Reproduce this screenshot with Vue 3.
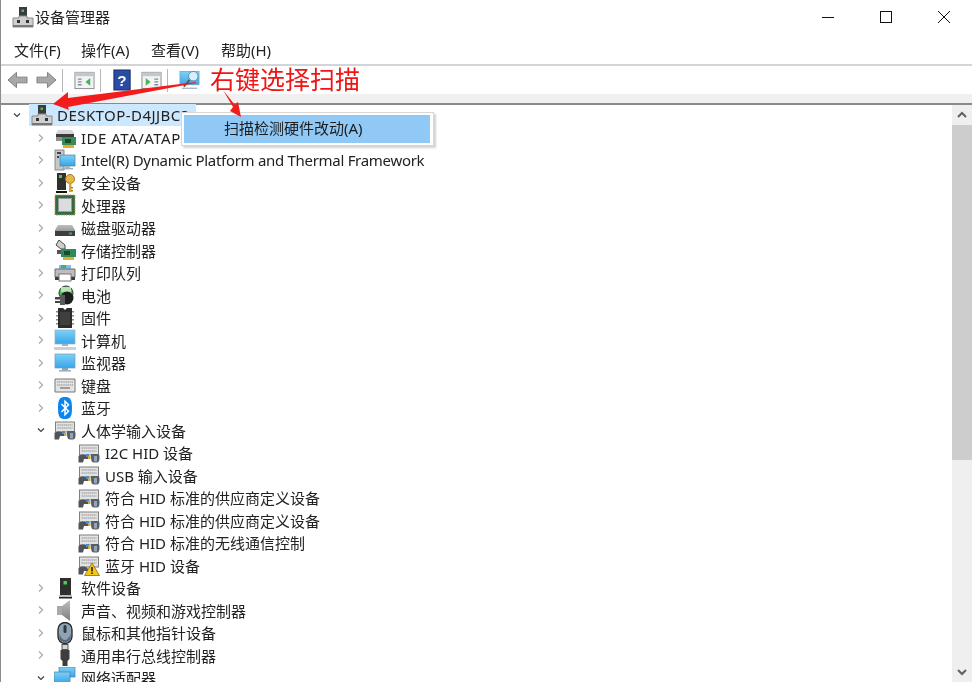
<script setup>
const rows = [
  { level: 1, icon: 'ide', text: 'IDE ATA/ATAPI 控制器', arrow: 'r', cls: 'wide' },
  { level: 1, icon: 'intel', text: 'Intel(R) Dynamic Platform and Thermal Framework', arrow: 'r', cls: 'tight' },
  { level: 1, icon: 'key', text: '安全设备', arrow: 'r' },
  { level: 1, icon: 'cpu', text: '处理器', arrow: 'r' },
  { level: 1, icon: 'disk', text: '磁盘驱动器', arrow: 'r' },
  { level: 1, icon: 'storage', text: '存储控制器', arrow: 'r' },
  { level: 1, icon: 'printer', text: '打印队列', arrow: 'r' },
  { level: 1, icon: 'battery', text: '电池', arrow: 'r' },
  { level: 1, icon: 'chip', text: '固件', arrow: 'r' },
  { level: 1, icon: 'computer', text: '计算机', arrow: 'r' },
  { level: 1, icon: 'monitor', text: '监视器', arrow: 'r' },
  { level: 1, icon: 'keyboard', text: '键盘', arrow: 'r' },
  { level: 1, icon: 'bluetooth', text: '蓝牙', arrow: 'r' },
  { level: 1, icon: 'hid', text: '人体学输入设备', arrow: 'd' },
  { level: 2, icon: 'hid', text: 'I2C HID 设备' },
  { level: 2, icon: 'hid', text: 'USB 输入设备' },
  { level: 2, icon: 'hid', text: '符合 HID 标准的供应商定义设备' },
  { level: 2, icon: 'hid', text: '符合 HID 标准的供应商定义设备' },
  { level: 2, icon: 'hid', text: '符合 HID 标准的无线通信控制' },
  { level: 2, icon: 'hidwarn', text: '蓝牙 HID 设备' },
  { level: 1, icon: 'soft', text: '软件设备', arrow: 'r' },
  { level: 1, icon: 'sound', text: '声音、视频和游戏控制器', arrow: 'r' },
  { level: 1, icon: 'mouse', text: '鼠标和其他指针设备', arrow: 'r' },
  { level: 1, icon: 'usb', text: '通用串行总线控制器', arrow: 'r' },
  { level: 1, icon: 'net', text: '网络适配器', arrow: 'd' }
]
const menus = ['文件(F)', '操作(A)', '查看(V)', '帮助(H)']
</script>

<template>
  <div class="win">
    <svg class="defs" width="0" height="0" aria-hidden="true">
      <defs>
        <linearGradient id="scr" x1="0" y1="0" x2="0" y2="1"><stop offset="0" stop-color="#7fd0f7"/><stop offset="1" stop-color="#38a6e8"/></linearGradient>
        <linearGradient id="gry" x1="0" y1="0" x2="0" y2="1"><stop offset="0" stop-color="#bdbdbd"/><stop offset="1" stop-color="#7f7f7f"/></linearGradient>
      </defs>
      <symbol id="i-pc" viewBox="0 0 22 22">
        <rect x="7" y="1" width="8" height="11" fill="#3b3b3b"/><rect x="9.500" y="3.500" width="2.500" height="2.500" fill="#3fc24f"/>
        <path d="M1 12h6v-2h8v2h6v9H1z" fill="#cfcfcf" stroke="#8a8a8a"/><rect x="5" y="14" width="3" height="3" fill="#333"/><rect x="14" y="14" width="3" height="3" fill="#333"/><rect x="1" y="19" width="20" height="2" fill="#777"/>
      </symbol>
      <symbol id="i-ide" viewBox="0 0 22 22">
        <path d="M2 6l2-3h14l2 3v3H2z" fill="#d5d5d5"/><rect x="2" y="7" width="18" height="3" fill="#3a3a3a"/><rect x="8" y="10" width="14" height="8" fill="#3b8a5a"/><rect x="2" y="10" width="6" height="4" fill="#8f8f8f"/><rect x="11" y="12" width="6" height="4" fill="#174f2c"/><rect x="9" y="18" width="11" height="3" fill="#e3ab2d"/>
      </symbol>
      <symbol id="i-intel" viewBox="0 0 22 22">
        <rect x="1" y="1" width="9" height="20" fill="#c8c8c8" stroke="#777" stroke-width=".8"/><rect x="3" y="3" width="4" height="2" fill="#444"/><rect x="3" y="7" width="2" height="2" fill="#444"/>
        <rect x="6" y="6" width="15" height="11" fill="url(#scr)" stroke="#4e7fa3" stroke-width=".7"/><rect x="11" y="17" width="5" height="2" fill="#a9b7c2"/><rect x="8" y="19" width="11" height="1.400" fill="#9fb0bc"/>
      </symbol>
      <symbol id="i-key" viewBox="0 0 22 22">
        <path d="M3 1h9v17H3z" fill="#2f2f2f"/><rect x="5" y="3" width="3" height="3" fill="#46d05a"/><path d="M2 19h11v2H2z" fill="#111"/>
        <circle cx="16" cy="7" r="4.500" fill="#e6b64a" stroke="#a47a1e"/><path d="M15 10h2.400v10H15z" fill="#d6a53a"/><path d="M17 15h2v1.600h-2zM17 18h2v1.600h-2z" fill="#a47a1e"/>
      </symbol>
      <symbol id="i-cpu" viewBox="0 0 22 22">
        <rect x="1" y="1" width="20" height="20" fill="#2f6b4c" stroke="#c9a13a" stroke-dasharray="1.500 1"/><rect x="4.500" y="4.500" width="13" height="13" fill="#dcdcdc" stroke="#9a9a9a"/>
      </symbol>
      <symbol id="i-disk" viewBox="0 0 22 22">
        <path d="M4 8h14l3 5v6H1v-6z" fill="url(#gry)"/><rect x="1" y="14" width="20" height="5" fill="#3e3e3e"/><rect x="15" y="15.500" width="3" height="2" fill="#2fb34a"/>
      </symbol>
      <symbol id="i-storage" viewBox="0 0 22 22">
        <path d="M5 1l6 5v4H7L2 6z" fill="#cfcfcf" stroke="#4a4a4a"/><path d="M3 11h5v4H3z" fill="#555"/><rect x="7" y="10" width="15" height="8" fill="#2f8a5a"/><rect x="10" y="12" width="6" height="4" fill="#174f2c"/><rect x="9" y="18" width="11" height="3" fill="#e3ab2d"/>
      </symbol>
      <symbol id="i-printer" viewBox="0 0 22 22">
        <rect x="5" y="3" width="12" height="5" fill="#79c2f0"/><rect x="7" y="3" width="5" height="3" fill="#4bb05e"/><path d="M1 7h20v8H1z" fill="#bdbdbd" stroke="#6d6d6d"/><rect x="1" y="15" width="4" height="3" fill="#3b3b3b"/><rect x="17" y="15" width="4" height="3" fill="#3b3b3b"/><rect x="5" y="12" width="12" height="7" fill="#fff" stroke="#777"/>
      </symbol>
      <symbol id="i-battery" viewBox="0 0 22 22">
        <circle cx="12" cy="9" r="7" fill="#55b85a" stroke="#333"/><rect x="7" y="3" width="10" height="5" fill="#b9e3b4"/><circle cx="13" cy="14" r="6.500" fill="#1e1e1e"/><path d="M1 13h7v2.500H1zM1 17h7v2H1z" fill="#444"/><path d="M6 11h5v10H6z" fill="#5a5a5a"/>
      </symbol>
      <symbol id="i-chip" viewBox="0 0 22 22">
        <path d="M4 1h5l2 2 2-2h5v20H4z" fill="#2d2d2d"/><path d="M2 4h2v1.500H2zM2 8h2v1.500H2zM2 12h2v1.500H2zM2 16h2v1.500H2zM18 4h2v1.500h-2zM18 8h2v1.500h-2zM18 12h2v1.500h-2zM18 16h2v1.500h-2z" fill="#888"/><rect x="6" y="5" width="10" height="13" fill="#3f3f3f"/>
      </symbol>
      <symbol id="i-computer" viewBox="0 0 22 22">
        <rect x="1" y="1" width="20" height="14" fill="url(#scr)" stroke="#8eb2c9" stroke-width=".7"/><rect x="8" y="15" width="6" height="2" fill="#9db1be"/><rect x="0" y="18" width="22" height="3" fill="#c9d2d8"/>
      </symbol>
      <symbol id="i-monitor" viewBox="0 0 22 22">
        <rect x="1" y="2" width="20" height="14" fill="url(#scr)" stroke="#6f9cb9" stroke-width=".7"/><rect x="8" y="16" width="6" height="2" fill="#8ea3b0"/><rect x="5" y="18" width="12" height="1.600" fill="#9eb1bd"/>
      </symbol>
      <symbol id="i-keyboard" viewBox="0 0 22 22">
        <path d="M1 5h20v13H1z" fill="#e4e4e4" stroke="#777"/><path d="M3 8h16M3 11h16" stroke="#a6a6a6" stroke-width="1.500" stroke-dasharray="1.400 .7"/><path d="M6 14h10" stroke="#8a8a8a" stroke-width="1.600"/>
      </symbol>
      <symbol id="i-bluetooth" viewBox="0 0 22 22">
        <path d="M11 0c5 0 7 2 7 11s-2 11-7 11-7-2-7-11 2-11 7-11z" fill="#0a84f0"/><path d="M7.500 7l7 7.200-3.500 3.500V4.300l3.500 3.500-7 7.200" fill="none" stroke="#fff" stroke-width="1.500"/>
      </symbol>
      <symbol id="i-hid" viewBox="0 0 22 22">
        <rect x="1.500" y="3" width="19" height="10" fill="#e2e2e2" stroke="#808080"/><path d="M3.500 6h15M3.500 9h15" stroke="#aaa" stroke-width="1.400" stroke-dasharray="1.400 .6"/>
        <path d="M0.500 14c2-2 7-2 9 0l1 3H6l-1 3.500H0.500z" fill="#50545a"/><path d="M13 12h7c1.500 0 1.500 2 1.500 4 0 3-1 4.500-2.500 4.500h-3c-3 0-3-3-3-8.500z" fill="#586069"/><path d="M16 14h3v5.500h-3z" fill="#94a5b5"/><rect x="8" y="12" width="3" height="3" fill="#3d8fd6"/><rect x="10" y="14" width="2.500" height="3" fill="#e4a034"/>
      </symbol>
      <symbol id="i-hidwarn" viewBox="0 0 22 22">
        <rect x="1.500" y="3" width="19" height="10" fill="#e2e2e2" stroke="#808080"/><path d="M3.500 6h15M3.500 9h15" stroke="#aaa" stroke-width="1.400" stroke-dasharray="1.400 .6"/>
        <path d="M0.500 14c2-2 7-2 9 0l1 3H6l-1 3.500H0.500z" fill="#50545a"/>
        <path d="M14 9l7.500 12.500H6.500z" fill="#f5c518" stroke="#7a5b06" stroke-width=".7"/><path d="M13.200 13h1.600v4.500h-1.600zM13.200 18.500h1.600v1.600h-1.600z" fill="#222"/>
      </symbol>
      <symbol id="i-soft" viewBox="0 0 22 22">
        <rect x="6" y="1" width="11" height="17" fill="#2f2f2f"/><rect x="9.500" y="4" width="3.500" height="3.500" fill="#46d05a"/><rect x="5" y="18" width="13" height="2" fill="#bcbcbc"/><rect x="5" y="20" width="13" height="1.500" fill="#222"/>
      </symbol>
      <symbol id="i-sound" viewBox="0 0 22 22">
        <path d="M3 7h5l8-6v21l-8-6H3z" fill="url(#gry)"/><path d="M3 7h5v9H3z" fill="#a9a9a9"/>
      </symbol>
      <symbol id="i-mouse" viewBox="0 0 22 22">
        <rect x="4" y="0.500" width="14" height="21" rx="7" fill="#8fa3b5" stroke="#222" stroke-width="1.300"/><rect x="9.500" y="3" width="3" height="8" rx="1.500" fill="#2d3a46"/><path d="M5.500 12c3 8 8 8 11 0v5c-2 4-9 4-11 0z" fill="#566877"/>
      </symbol>
      <symbol id="i-usb" viewBox="0 0 22 22">
        <rect x="8" y="0.500" width="6" height="5" fill="#d5d5d5" stroke="#555"/><path d="M6.500 6h9v9l-2 2v5h-5v-5l-2-2z" fill="#3d3d3d"/>
      </symbol>
      <symbol id="i-net" viewBox="0 0 22 22">
        <rect x="5" y="0" width="16" height="10" fill="url(#scr)" stroke="#4e7fa3" stroke-width=".7"/><rect x="0" y="5" width="16" height="11" fill="url(#scr)" stroke="#4e7fa3" stroke-width=".7"/>
      </symbol>
      <symbol id="i-chev-r" viewBox="0 0 16 16"><path d="M6 4.500l3.500 3.500-3.500 3.500" fill="none" stroke="#aaa" stroke-width="1.200"/></symbol>
      <symbol id="i-chev-d" viewBox="0 0 16 16"><path d="M5 6.500l3 3 3-3" fill="none" stroke="#404040" stroke-width="1.200"/></symbol>
    </svg>

    <header class="title">
      <svg class="ico"><use href="#i-pc"/></svg>
      <span class="title-text">设备管理器</span>
      <div class="caps">
        <svg class="cap" viewBox="0 0 14 14"><path d="M1 7.500h12" stroke="#111" fill="none"/></svg>
        <svg class="cap" viewBox="0 0 14 14"><rect x="1.500" y="1.500" width="11" height="11" stroke="#111" fill="none"/></svg>
        <svg class="cap" viewBox="0 0 14 14"><path d="M1 1l12 12M13 1L1 13" stroke="#111" fill="none"/></svg>
      </div>
    </header>

    <nav class="menubar">
      <span v-for="m in menus" :key="m" class="menu">{{ m }}</span>
    </nav>

    <div class="toolbar">
      <svg class="tool" viewBox="0 0 22 22"><path d="M1 11l9-8v5h11v6H10v5z" fill="#a8a8a8" stroke="#7e7e7e"/></svg>
      <svg class="tool" viewBox="0 0 22 22"><path d="M21 11l-9-8v5H1v6h11v5z" fill="#a8a8a8" stroke="#7e7e7e"/></svg>
      <i class="sep"></i>
      <svg class="tool" viewBox="0 0 22 22"><rect x="1" y="3" width="20" height="17" fill="#f3f3f3" stroke="#8a8a8a"/><rect x="1" y="3" width="20" height="4" fill="#c2c8cd"/><path d="M4 10h4M4 13h4M4 16h4" stroke="#7b8da0" stroke-width="1.400"/><path d="M17 9v8l-5-4z" fill="#46b35a"/></svg>
      <i class="sep"></i>
      <svg class="tool" viewBox="0 0 22 22"><rect x="2" y="0.500" width="17" height="21" fill="#2a4ca5" stroke="#172b66"/><text x="10.500" y="17" class="q">?</text></svg>
      <svg class="tool" viewBox="0 0 22 22"><rect x="1" y="3" width="20" height="17" fill="#f3f3f3" stroke="#8a8a8a"/><rect x="1" y="3" width="20" height="4" fill="#c2c8cd"/><path d="M5 9v8l5-4z" fill="#46b35a"/><path d="M14 10h4M14 13h4M14 16h4" stroke="#7b8da0" stroke-width="1.400"/></svg>
      <i class="sep"></i>
      <svg class="tool" viewBox="0 0 22 22"><rect x="1" y="2" width="20" height="14" fill="url(#scr)" stroke="#6f9cb9" stroke-width=".7"/><circle cx="15" cy="7" r="5" fill="#d8eefb" stroke="#4e8fb6"/><path d="M11 11l-6 7" stroke="#555" stroke-width="2"/><rect x="3" y="19" width="16" height="1.300" fill="#9eb1bd"/></svg>
    </div>

    <div class="strip"></div>

    <main class="content">
      <div class="tree">
        <div class="row root-row">
          <svg class="chev"><use href="#i-chev-d"/></svg>
          <span class="root-label">
            <svg class="ico"><use href="#i-pc"/></svg>
            <span class="lbl root-lbl">DESKTOP-D4JJBC3</span>
          </span>
        </div>
        <div v-for="(r, i) in rows" :key="i" class="row" :class="'lv' + r.level">
          <svg v-if="r.arrow" class="chev"><use :href="r.arrow === 'r' ? '#i-chev-r' : '#i-chev-d'"/></svg>
          <span v-else class="chev"></span>
          <svg class="ico"><use :href="'#i-' + r.icon"/></svg>
          <span class="lbl" :class="r.cls">{{ r.text }}</span>
        </div>
      </div>
      <div class="scrollbar">
        <svg class="sbtn" viewBox="0 0 20 20"><path d="M6 12l4-4 4 4" fill="none" stroke="#606060" stroke-width="2"/></svg>
        <div class="thumb"></div>
        <div class="track"></div>
        <svg class="sbtn" viewBox="0 0 20 20"><path d="M6 8l4 4 4-4" fill="none" stroke="#606060" stroke-width="2"/></svg>
      </div>
    </main>

    <div class="ctx"><div class="ctx-item">扫描检测硬件改动(A)</div></div>
    <div class="note">右键选择扫描</div>
    <svg class="arrows" viewBox="0 0 972 682">
      <path d="M196 82L68 98V92L53 104L69 110L68 107L196 83z" fill="#f21c1c"/>
      <path d="M223 90L234.500 104.500L238 102L241 117L230 111L233 107z" fill="#f21c1c"/>
    </svg>
  </div>
</template>

<style>
html, body { margin: 0; background: #fff; overflow: hidden; }
</style>

<style scoped>
.win {
  position: relative;
  width: 972px;
  height: 682px;
  overflow: hidden;
  background: #fff;
  box-sizing: border-box;
  border-left: 1px solid #8c8c8c;
  font-family: "Noto Sans", "Noto Sans CJK SC", sans-serif;
  font-size: 15px;
  color: #222;
  display: flex;
  flex-direction: column;
  filter: blur(0.35px);
}
.defs { display: block; position: absolute; }
.title { height: 34px; display: flex; align-items: center; padding-left: 11px; gap: 1px; flex: none; }
.title-text { line-height: 22px; }
.caps { margin-left: auto; display: flex; align-items: center; margin-right: 21px; gap: 44px; }
.cap { width: 14px; height: 14px; display: block; }
.menubar { height: 30px; padding: 1px 0 0 13px; display: flex; align-items: center; flex: none; box-sizing: border-box; }
.menu { width: 70px; flex: none; white-space: nowrap; }
.menu:first-child { width: 67px; }
.toolbar { height: 28px; border-top: 2px solid #d2d4d8; display: flex; align-items: center; padding-left: 6px; flex: none; }
.tool { width: 21px; height: 22px; display: block; flex: none; }
.tool + .tool { margin-left: 8px; }
.q { font: 700 16px "Liberation Sans", sans-serif; fill: #fff; text-anchor: middle; }
.sep { width: 1px; height: 23px; background: #b8b8b8; margin: 0 11px 0 5px; flex: none; }
.strip { height: 9px; background: #f0f0f0; border-bottom: 2px solid #8a8a8a; flex: none; }
.content { flex: 1; min-height: 0; display: flex; }
.tree { flex: 1; min-width: 0; overflow: hidden; margin-top: -1px; }
.row { height: 22.5px; display: flex; align-items: center; white-space: nowrap; }
.root-row { padding-left: 8px; }
.root-row .chev { margin-right: 4px; }
.root-row .lbl { margin-left: 4px; letter-spacing: .45px; }
.root-label { display: flex; align-items: center; height: 22px; background: #cce8ff; padding: 0 6px 0 2px; }
.wide { letter-spacing: .5px; }
.tight { letter-spacing: -.3px; }
.lv1 { padding-left: 32px; }
.lv2 { padding-left: 56px; }
.chev { width: 16px; height: 16px; flex: none; margin-right: 5px; display: block; }
.ico { width: 22px; height: 22px; flex: none; display: block; }
.lbl { margin-left: 5px; }
.scrollbar { width: 20px; flex: none; display: flex; flex-direction: column; background: #efefef; }
.sbtn { width: 20px; height: 20px; display: block; flex: none; }
.thumb { height: 335px; background: #cdcdcd; flex: none; }
.track { flex: 1; }
.ctx {
  position: absolute;
  left: 180px;
  top: 112px;
  width: 253px;
  height: 34px;
  box-sizing: border-box;
  background: #fff;
  border: 1px solid #d6d6d6;
  box-shadow: 2px 2px 2px rgba(0, 0, 0, .18);
  padding: 2px 3px 2px 2px;
}
.ctx-item { height: 28px; line-height: 27px; background: #90c8f6; padding-left: 40px; color: #1c1c1c; }
.note {
  position: absolute;
  left: 209px;
  top: 60px;
  font-size: 25px;
  line-height: 36px;
  color: #f01414;
  font-family: "Noto Sans CJK SC", sans-serif;
  white-space: nowrap;
}
.arrows { position: absolute; left: -1px; top: 0; width: 972px; height: 682px; pointer-events: none; }
</style>
